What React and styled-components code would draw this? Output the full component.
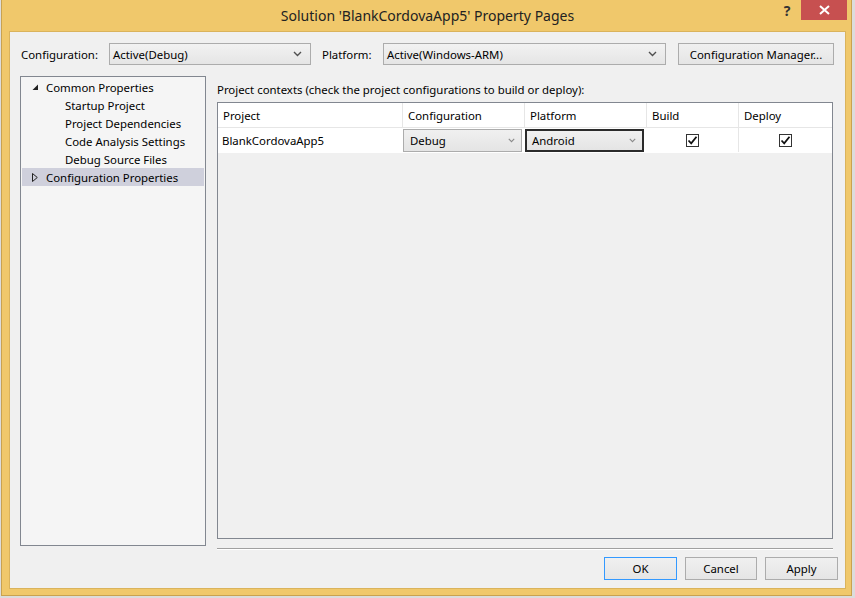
import React from 'react';
import styled, { createGlobalStyle } from 'styled-components';

const GlobalStyle = createGlobalStyle`
  html, body {
    margin: 0;
    padding: 0;
    background: #dcdcdc;
  }
  body {
    font-family: 'Segoe UI', 'Noto Sans', 'Liberation Sans', sans-serif;
    font-size: 11.4px;
    color: #000;
  }
`;

const Window = styled.div`
  box-sizing: border-box;
  width: 851px;
  height: 596px;
  margin-left: 1px;
  display: flex;
  flex-direction: column;
  background: #f0c86b;
  border: 1px solid #c9a250;
  border-top: none;
  padding: 0 5px 6px 7px;
`;

const TitleBar = styled.div`
  position: relative;
  height: 31px;
  display: flex;
  align-items: center;
  justify-content: center;
  font-size: 14px;
  color: #222;
  padding-bottom: 1px;
  box-sizing: border-box;
`;

const TitleButtons = styled.div`
  position: absolute;
  top: 0;
  right: -1px;
  display: flex;
  align-items: flex-start;
`;

const HelpBtn = styled.div`
  width: 28px;
  height: 20px;
  display: flex;
  align-items: center;
  justify-content: center;
  font-weight: bold;
  font-size: 14px;
  color: #333;
`;

const CloseBtn = styled.div`
  width: 46px;
  height: 20px;
  background: #c75050;
  display: flex;
  align-items: center;
  justify-content: center;
`;

const Content = styled.div`
  flex: 1;
  background: #f0f0f0;
  border: 1px solid #dab35c;
  display: flex;
  flex-direction: column;
  padding: 11px 6px 8px 10px;
`;

const TopRow = styled.div`
  display: flex;
  align-items: center;
  height: 22px;
  padding-left: 1px;
`;

const Label = styled.span`
  width: ${(p) => p.$w}px;
  white-space: nowrap;
`;

const Combo = styled.div`
  box-sizing: border-box;
  width: ${(p) => p.$w}px;
  height: 22px;
  border: 1px solid #acacac;
  background: linear-gradient(#f2f2f2, #e5e5e5);
  display: flex;
  align-items: center;
  justify-content: space-between;
  padding: 0 8px 0 3px;
  margin-right: ${(p) => p.$mr || 0}px;
`;

const Button = styled.div`
  box-sizing: border-box;
  width: ${(p) => p.$w}px;
  height: ${(p) => p.$h || 22}px;
  border: 1px solid ${(p) => (p.$focus ? '#3399ff' : '#acacac')};
  background: linear-gradient(#f0f0f0, #e5e5e5);
  display: flex;
  align-items: center;
  justify-content: center;
`;

const Main = styled.div`
  display: flex;
  align-items: flex-start;
  margin-top: 11px;
`;

const Tree = styled.div`
  box-sizing: border-box;
  width: 186px;
  height: 470px;
  border: 1px solid #828790;
  background: #f5f5f5;
  padding: 1px;
  margin-right: 11px;
`;

const TreeItem = styled.div`
  height: 18px;
  display: flex;
  align-items: center;
  padding-left: ${(p) => p.$indent}px;
  background: ${(p) => (p.$selected ? '#cfd0dc' : 'transparent')};
  white-space: nowrap;
`;

const Arrow = styled.span`
  width: 14px;
  display: flex;
  align-items: center;
`;

const RightCol = styled.div`
  width: 616px;
  display: flex;
  flex-direction: column;
`;

const Caption = styled.div`
  height: 26px;
  display: flex;
  align-items: center;
`;

const Grid = styled.div`
  box-sizing: border-box;
  height: 437px;
  flex-shrink: 0;
  border: 1px solid #828790;
  background: #f0f0f0;
`;

const GridRow = styled.div`
  display: grid;
  grid-template-columns: 185px 122px 122px 92px 1fr;
  height: 24px;
  background: #fff;
  border-bottom: 1px solid ${(p) => (p.$header ? '#e6e6e6' : 'transparent')};
`;

const HeadCell = styled.div`
  display: flex;
  align-items: center;
  padding-left: 5px;
  border-right: 1px solid #e6e6e6;
  &:last-child {
    border-right: none;
  }
`;

const Cell = styled.div`
  display: flex;
  align-items: center;
  justify-content: ${(p) => (p.$center ? 'center' : 'flex-start')};
  padding-left: ${(p) => (p.$center ? 0 : 4)}px;
  border-right: 1px solid ${(p) => (p.$line ? '#e6e6e6' : 'transparent')};
  &:last-child {
    border-right: none;
  }
`;

const CellCombo = styled.div`
  box-sizing: border-box;
  width: 119px;
  height: 23px;
  margin-left: -4px;
  border: ${(p) => (p.$focus ? '2px solid #2b2b2b' : '1px solid #acacac')};
  background: linear-gradient(#f0f0f0, #e4e4e4);
  display: flex;
  align-items: center;
  justify-content: space-between;
  padding: 0 6px 0 ${(p) => (p.$focus ? 5 : 6)}px;
`;

const Check = styled.div`
  box-sizing: border-box;
  width: 13px;
  height: 13px;
  border: 1px solid #333;
  background: #fff;
  display: flex;
  align-items: center;
  justify-content: center;
`;

const Separator = styled.div`
  margin-top: 9px;
  height: 1px;
  background: #a0a0a0;
  border-bottom: 1px solid #fff;
`;

const Footer = styled.div`
  display: flex;
  justify-content: flex-end;
  gap: 8px;
  margin-top: 7px;
  padding-right: 1px;
`;

const Caret = ({ light }) => (
  <svg width={light ? 7 : 9} height={light ? 5 : 6} viewBox="0 0 9 6">
    <path d="M1 1 L4.5 4.5 L8 1" fill="none" stroke={light ? '#8a8a8a' : '#505050'} strokeWidth="1.4" />
  </svg>
);

const CheckMark = () => (
  <svg width="11" height="11" viewBox="0 0 11 11">
    <path d="M1.5 5.5 L4.2 8.3 L9.5 1.8" fill="none" stroke="#111" strokeWidth="1.8" />
  </svg>
);

const App = () => {
  return (
    <>
      <GlobalStyle />
      <Window>
        <TitleBar>
          Solution 'BlankCordovaApp5' Property Pages
          <TitleButtons>
            <HelpBtn>?</HelpBtn>
            <CloseBtn>
              <svg width="11" height="10" viewBox="0 0 11 10">
                <path d="M1 1 L10 9 M10 1 L1 9" stroke="#fff" strokeWidth="2" />
              </svg>
            </CloseBtn>
          </TitleButtons>
        </TitleBar>
        <Content>
          <TopRow>
            <Label $w={88}>Configuration:</Label>
            <Combo $w={202} $mr={11}>
              Active(Debug)
              <Caret />
            </Combo>
            <Label $w={61}>Platform:</Label>
            <Combo $w={283} $mr={12}>
              Active(Windows-ARM)
              <Caret />
            </Combo>
            <Button $w={156}>Configuration Manager...</Button>
          </TopRow>
          <Main>
            <Tree>
              <TreeItem $indent={10}>
                <Arrow>
                  <svg width="7" height="7" viewBox="0 0 7 7">
                    <path d="M6 0.5 L6 6 L0.5 6 Z" fill="#222" />
                  </svg>
                </Arrow>
                Common Properties
              </TreeItem>
              <TreeItem $indent={43}>Startup Project</TreeItem>
              <TreeItem $indent={43}>Project Dependencies</TreeItem>
              <TreeItem $indent={43}>Code Analysis Settings</TreeItem>
              <TreeItem $indent={43}>Debug Source Files</TreeItem>
              <TreeItem $indent={10} $selected>
                <Arrow>
                  <svg width="6" height="9" viewBox="0 0 6 9">
                    <path d="M0.5 0.5 L5.3 4.5 L0.5 8.5 Z" fill="none" stroke="#222" strokeWidth="1" />
                  </svg>
                </Arrow>
                Configuration Properties
              </TreeItem>
            </Tree>
            <RightCol>
              <Caption>Project contexts (check the project configurations to build or deploy):</Caption>
              <Grid>
                <GridRow $header>
                  <HeadCell>Project</HeadCell>
                  <HeadCell>Configuration</HeadCell>
                  <HeadCell>Platform</HeadCell>
                  <HeadCell>Build</HeadCell>
                  <HeadCell>Deploy</HeadCell>
                </GridRow>
                <GridRow>
                  <Cell>BlankCordovaApp5</Cell>
                  <Cell>
                    <CellCombo>
                      Debug
                      <Caret light />
                    </CellCombo>
                  </Cell>
                  <Cell>
                    <CellCombo $focus>
                      Android
                      <Caret light />
                    </CellCombo>
                  </Cell>
                  <Cell $center $line>
                    <Check>
                      <CheckMark />
                    </Check>
                  </Cell>
                  <Cell $center>
                    <Check>
                      <CheckMark />
                    </Check>
                  </Cell>
                </GridRow>
              </Grid>
              <Separator />
            </RightCol>
          </Main>
          <Footer>
            <Button $w={73} $h={23} $focus>OK</Button>
            <Button $w={72} $h={23}>Cancel</Button>
            <Button $w={73} $h={23}>Apply</Button>
          </Footer>
        </Content>
      </Window>
    </>
  );
};

export default App;
